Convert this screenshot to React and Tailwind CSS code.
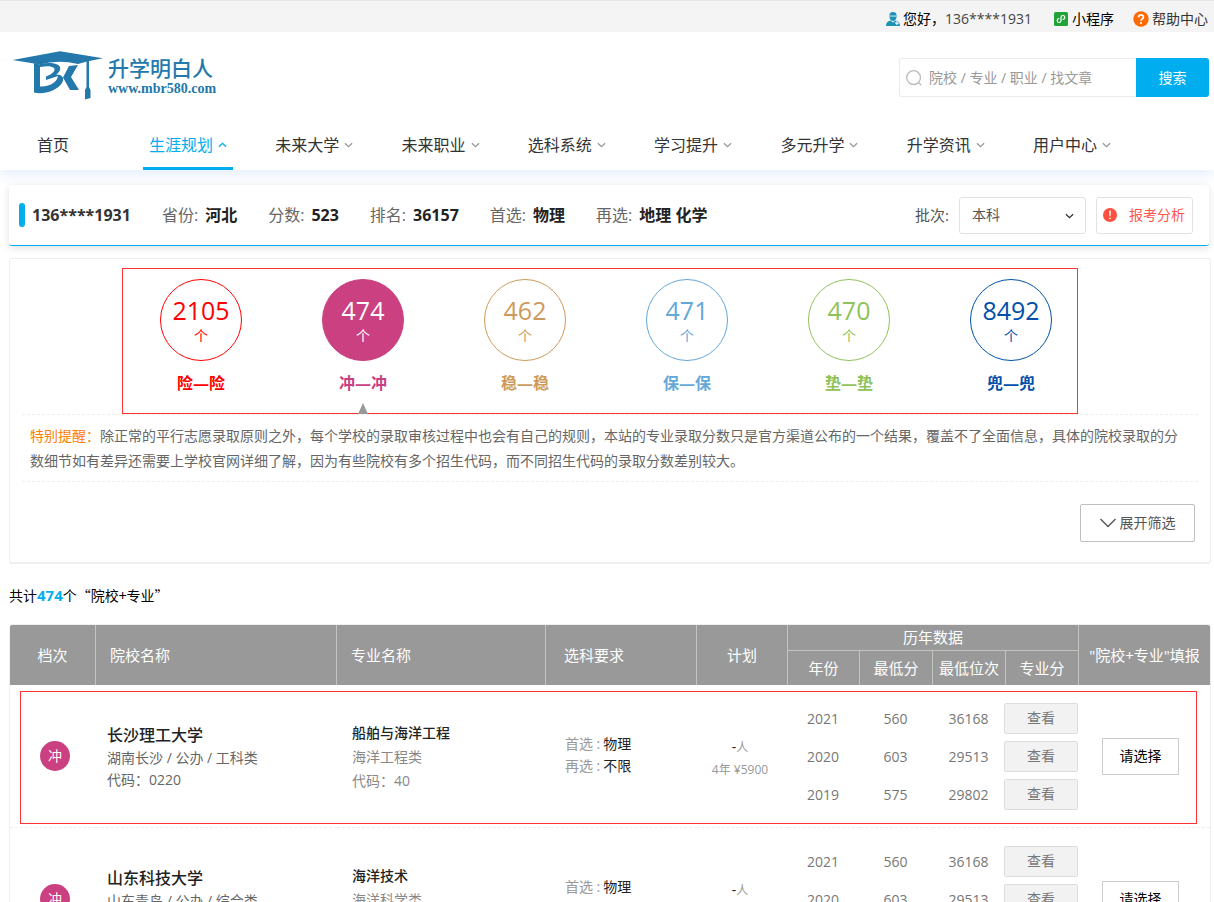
import { clsx } from "clsx";

const navItems = [
  { label: "生涯规划", active: true },
  { label: "未来大学" },
  { label: "未来职业" },
  { label: "选科系统" },
  { label: "学习提升" },
  { label: "多元升学" },
  { label: "升学资讯" },
  { label: "用户中心" },
];

const profile = [
  { label: "省份", value: "河北" },
  { label: "分数", value: "523" },
  { label: "排名", value: "36157" },
  { label: "首选", value: "物理" },
  { label: "再选", value: "地理 化学" },
];

const tiers = [
  { name: "险", count: 2105, color: "text-[#ff0000]" },
  { name: "冲", count: 474, color: "text-[#cb4080]", active: true },
  { name: "稳", count: 462, color: "text-[#cd9a5b]" },
  { name: "保", count: 471, color: "text-[#64a7d9]" },
  { name: "垫", count: 470, color: "text-[#8fc258]" },
  { name: "兜", count: 8492, color: "text-[#0050aa]" },
];

const history = [
  { year: 2021, score: 560, rank: 36168 },
  { year: 2020, score: 603, rank: 29513 },
  { year: 2019, score: 575, rank: 29802 },
];

const rows = [
  {
    id: 1,
    school: "长沙理工大学",
    info: "湖南长沙 / 公办 / 工科类",
    code: "0220",
    major: "船舶与海洋工程",
    category: "海洋工程类",
    majorCode: "40",
    first: "物理",
    second: "不限",
    fee: "4年 ¥5900",
    marked: true,
  },
  {
    id: 2,
    school: "山东科技大学",
    info: "山东青岛 / 公办 / 综合类",
    code: "0424",
    major: "海洋技术",
    category: "海洋科学类",
    majorCode: "21",
    first: "物理",
    second: "不限",
    fee: "4年 ¥5500",
  },
];

function Chevron({ up, className }) {
  return (
    <svg viewBox="0 0 10 6" fill="none" stroke="currentColor" strokeWidth="1.5" className={className}>
      <path d={up ? "M1 5l4-3.8L9 5" : "M1 1l4 3.8L9 1"} />
    </svg>
  );
}

function Logo() {
  return (
    <a href="#" className="flex items-center gap-1 text-[#2478ab]">
      <svg viewBox="0 0 92 52" className="h-[52px] w-[92px]" fill="currentColor">
        <path d="M0.700 10L48 1.300L91 8.300L76 11.300L66 14Q46 9.500 28 14.500L22 13.500Z" />
        <path d="M22 13L28 14.500V36.500C39 37 45.500 31 46 26L34 30V26.500C41 24 44 20 42 18C39 15.500 34 16 28 17V14C40 11.500 50 14 48 20C47 22.500 45 24 44 24.500C50 24 53 28 50 33C45 41 31 45 22 42.500Z" />
        <path d="M57 16L66 15L59 27L67 40H58L51 27.500Z" />
        <path d="M74.500 10.500H77V37L78.500 40V48L73 49.500V40L74.500 37Z" />
      </svg>
      <span className="flex flex-col">
        <span className="text-[21px] leading-[26px] font-medium">升学明白人</span>
        <span className="font-['Liberation_Serif',serif] text-sm leading-4 font-bold">www.mbr580.com</span>
      </span>
    </a>
  );
}

function TopBar() {
  return (
    <div className="flex h-8 items-center justify-end border-t border-[#e6e6e6] bg-[#f4f4f4] pt-1 pr-[6px] text-sm leading-5 text-black">
      <a href="#" className="flex items-center gap-[3px]">
        <svg viewBox="0 0 14 14" className="size-[14px]" fill="#1c93b5">
          <path d="M3.500 3C3.500 1 5 0 7 0s3.500 1 3.500 3v2C10.500 7.300 9 9 7 9S3.500 7.300 3.500 5z" />
          <path d="M4 3.600h6v.9H4z" fill="#f4f4f4" />
          <path d="M0 14c0-3 1.500-5 4.500-5.500L7 10.500l2.500-2c3 .5 4.500 2.500 4.500 5.500z" />
          <path d="M10.300 9.300h1.200v1.300h1.300v1.200h-1.300v1.300h-1.200v-1.300H9v-1.200h1.300z" fill="#f4f4f4" />
        </svg>
        <span>
          您好，<span className="text-[#444]">136****1931</span>
        </span>
      </a>
      <a href="#" className="ml-[22px] flex items-center gap-1">
        <svg viewBox="0 0 14 14" className="size-[14px]">
          <rect width="14" height="14" rx="1.500" fill="#21a33a" />
          <path
            d="M4.800 6.700a1.900 1.900 0 1 0 2.200 2V5.300a1.900 1.900 0 1 1 2.200 2"
            fill="none"
            stroke="#fff"
            strokeWidth="1.200"
            strokeLinecap="round"
          />
        </svg>
        小程序
      </a>
      <a href="#" className="ml-[19px] flex items-center gap-[3px] text-[#333]">
        <svg viewBox="0 0 16 16" className="size-4">
          <circle cx="8" cy="8" r="7.700" fill="#ff6a00" />
          <path d="M5.600 6.300C5.600 3.200 10.400 3.200 10.400 6.200C10.400 8 8 8 8 9.700" fill="none" stroke="#fff" strokeWidth="1.800" />
          <circle cx="8" cy="12" r="1.100" fill="#fff" />
        </svg>
        帮助中心
      </a>
    </div>
  );
}

function Header() {
  return (
    <header className="shadow-[0_4px_14px_#e3edfc]">
      <TopBar />
      <div className="flex h-[86px] items-start justify-between pt-[18px] pr-[5px] pl-3">
        <Logo />
        <form className="mt-2 flex h-[39px] w-[310px]">
          <label className="flex min-w-0 flex-1 items-center gap-[7px] rounded-l-[3px] border border-r-0 border-[#ebebeb] pl-[6px]">
            <svg viewBox="0 0 16 16" className="size-4 shrink-0" fill="none" stroke="#bbb" strokeWidth="1.300">
              <circle cx="7.600" cy="7.600" r="6.900" />
              <path d="M12.500 12.500l2.700 2.700" />
            </svg>
            <input
              type="text"
              aria-label="搜索"
              placeholder="院校 / 专业 / 职业 / 找文章"
              className="w-full min-w-0 text-sm outline-none placeholder:text-[#999]"
            />
          </label>
          <button type="button" className="w-[73px] rounded-r-[3px] bg-[#00aeef] text-sm text-white">
            搜索
          </button>
        </form>
      </div>
      <nav className="flex h-[52px] pr-[97px] pl-[30px] text-base text-[#333]">
        <a href="#" className="w-[113px] pl-[7px] leading-[54px]">
          首页
        </a>
        <div className="flex flex-1 justify-between">
          {navItems.map((item) => (
            <a
              key={item.label}
              href="#"
              className={clsx(
                "flex w-[90px] items-center justify-center gap-[5px] border-b-3 pt-1",
                item.active ? "border-[#00aeef] text-[#00aeef]" : "border-transparent",
              )}
            >
              <span className="shrink-0">{item.label}</span>
              <Chevron up={item.active} className={clsx("h-[6px] w-[9px]", !item.active && "text-[#999]")} />
            </a>
          ))}
        </div>
      </nav>
    </header>
  );
}

function ProfileBar() {
  return (
    <section className="mr-[2px] flex h-[61px] items-center rounded-[3px] border-b border-[#00aeef] bg-white pr-4 pl-[10px] text-base shadow-[0_2px_8px_rgba(0,0,0,0.12)]">
      <span className="h-6 w-[6px] rounded-full bg-[#00aeef]" />
      <b className="ml-[7px] text-[#333]">136****1931</b>
      {profile.map((item) => (
        <span key={item.label} className="ml-[31px] text-[#666]">
          {item.label}:<b className="ml-[7px] text-[#222]">{item.value}</b>
        </span>
      ))}
      <label htmlFor="batch" className="ml-auto text-[15px] text-[#555]">
        批次:
      </label>
      <div className="relative ml-[10px]">
        <select
          id="batch"
          className="h-[37px] w-[127px] appearance-none rounded-[3px] border border-[#e2e2e2] bg-white pl-3 text-sm text-[#555]"
        >
          <option>本科</option>
        </select>
        <Chevron className="pointer-events-none absolute top-4 right-3 h-[6px] w-[9px] text-[#333]" />
      </div>
      <button
        type="button"
        className="ml-[10px] flex h-[37px] w-[97px] items-center gap-3 rounded-[3px] border border-[#e2e2e2] pl-[6px] text-sm text-[#ff5548]"
      >
        <svg viewBox="0 0 14 14" className="size-[14px] shrink-0">
          <circle cx="7" cy="7" r="7" fill="#ff4f3f" />
          <path d="M6.100 2.800h1.800l-.4 5.400h-1z" fill="#fff" />
          <circle cx="7" cy="10.300" r=".9" fill="#fff" />
        </svg>
        报考分析
      </button>
    </section>
  );
}

function TierPanel() {
  return (
    <section className="mt-3 rounded-[3px] border border-b-2 border-[#efefef] px-3 pt-[9px] pb-5">
      <div className="mr-[120px] ml-[100px] flex h-[146px] justify-between border border-[#ff3333] pt-[10px] pr-[25px] pl-[37px]">
        {tiers.map((tier) => (
          <button key={tier.name} type="button" className={clsx("flex w-[82px] flex-col items-center", tier.color)}>
            <span
              className={clsx(
                "flex size-[82px] shrink-0 flex-col items-center rounded-full border border-current pt-[15px]",
                tier.active && "bg-[#cb4080]",
              )}
            >
              <span className={clsx("text-[25px] leading-[30px]", tier.active && "text-white")}>{tier.count}</span>
              <span className={clsx("text-sm leading-[22px]", tier.active && "text-white")}>个</span>
            </span>
            <b className="mt-[10px] text-base leading-6">
              {tier.name}—{tier.name}
            </b>
            {tier.active && (
              <svg viewBox="0 0 10 11" className="mt-2 h-[11px] w-[10px] shrink-0" fill="#999">
                <path d="M5 0l5 11H0z" />
              </svg>
            )}
          </button>
        ))}
      </div>
      <p className="border-y border-dashed border-[#eee] px-2 py-2 text-sm leading-[25px] text-[#666]">
        <span className="text-[#ff8000]">特别提醒：</span>
        除正常的平行志愿录取原则之外，每个学校的录取审核过程中也会有自己的规则，本站的专业录取分数只是官方渠道公布的一个结果，覆盖不了全面信息，具体的院校录取的分数细节如有差异还需要上学校官网详细了解，因为有些院校有多个招生代码，而不同招生代码的录取分数差别较大。
      </p>
      <button
        type="button"
        className="mt-[22px] mr-[3px] ml-auto flex h-[38px] w-[115px] items-center justify-center gap-1 rounded-[2px] border border-[#bfbfbf] text-sm text-[#555]"
      >
        <svg viewBox="0 0 16 10" className="h-[10px] w-4" fill="none" stroke="currentColor" strokeWidth="1.300">
          <path d="M.5 1L8 8.500L15.500 1" />
        </svg>
        展开筛选
      </button>
    </section>
  );
}

function ResultRow({ row }) {
  return (
    <tr className="relative h-[143px] text-sm text-[#777]">
      <td>
        {row.marked && (
          <span className="pointer-events-none absolute top-[6px] right-[13px] bottom-1 left-[10px] border border-[#ff3333]" />
        )}
        <span className="ml-[30px] flex size-[30px] items-center justify-center rounded-full bg-[#cb4080] text-white">冲</span>
      </td>
      <td className="pt-[2px] pl-[11px] leading-[22px] text-[#666]">
        <h3 className="text-base leading-6 font-medium text-[#222]">{row.school}</h3>
        <p>{row.info}</p>
        <p>代码：{row.code}</p>
      </td>
      <td className="pt-[2px] pl-[15px] leading-6 text-[#888]">
        <h4 className="font-medium text-[#222]">{row.major}</h4>
        <p>{row.category}</p>
        <p>代码：{row.majorCode}</p>
      </td>
      <td className="pb-[2px] pl-[19px] leading-[22px] text-[#999]">
        <p>
          首选 :<span className="ml-[3px] text-[#222]">{row.first}</span>
        </p>
        <p>
          再选 :<span className="ml-[3px] text-[#222]">{row.second}</span>
        </p>
      </td>
      <td className="pt-[6px] pr-[5px] text-center text-xs leading-[22px] text-[#999]">
        <p>
          <span className="text-sm text-[#222]">-</span>人
        </p>
        <p>{row.fee}</p>
      </td>
      {["year", "score", "rank"].map((field) => (
        <td key={field} className="pr-[2px]">
          <div className="flex flex-col gap-[7px] text-center leading-[31px]">
            {history.map((h) => (
              <span key={h.year}>{h[field]}</span>
            ))}
          </div>
        </td>
      ))}
      <td>
        <div className="-ml-[2px] flex flex-col gap-[7px]">
          {history.map((h) => (
            <button key={h.year} type="button" className="h-[31px] w-[74px] rounded-[2px] border border-[#ddd] bg-[#f2f2f2]">
              查看
            </button>
          ))}
        </div>
      </td>
      <td>
        <button type="button" className="ml-[23px] h-[37px] w-[77px] border border-[#ccc] text-black">
          请选择
        </button>
      </td>
    </tr>
  );
}

function ResultTable() {
  return (
    <div className="overflow-hidden rounded-[3px] border border-[#efefef]">
      <table className="w-full table-fixed border-separate border-spacing-0">
        <colgroup>
          <col className="w-[86px]" />
          <col />
          <col className="w-[209px]" />
          <col className="w-[151px]" />
          <col className="w-[91px]" />
          <col className="w-[72px]" />
          <col className="w-[73px]" />
          <col className="w-[73px]" />
          <col className="w-[73px]" />
          <col className="w-[131px]" />
        </colgroup>
        <thead className="bg-[#999] text-[15px] text-white [&_th]:border-[#c4c4be] [&_th]:font-normal">
          <tr className="h-[26px]">
            <th rowSpan={2} className="border-r">档次</th>
            <th rowSpan={2} className="border-r pl-[14px] text-left">院校名称</th>
            <th rowSpan={2} className="border-r pl-[14px] text-left">专业名称</th>
            <th rowSpan={2} className="border-r pl-[18px] text-left">选科要求</th>
            <th rowSpan={2} className="border-r">计划</th>
            <th colSpan={4} className="border-r border-b leading-[25px]">历年数据</th>
            <th rowSpan={2}>"院校+专业"填报</th>
          </tr>
          <tr className="h-[34px]">
            <th className="border-r">年份</th>
            <th className="border-r">最低分</th>
            <th className="border-r">最低位次</th>
            <th className="border-r">专业分</th>
          </tr>
        </thead>
        <tbody className="[&_td]:border-b [&_td]:border-dashed [&_td]:border-[#eee]">
          {rows.map((row) => (
            <ResultRow key={row.id} row={row} />
          ))}
        </tbody>
      </table>
    </div>
  );
}

export default function App() {
  return (
    <div className="min-h-screen overflow-x-hidden bg-white font-['Open_Sans','Noto_Sans_CJK_SC',sans-serif]">
      <Header />
      <main className="mt-[15px] mr-[3px] ml-[9px]">
        <ProfileBar />
        <TierPanel />
        <p className="mt-5 mb-[17px] text-sm leading-[22px] text-black">
          共计<b className="text-[15px] text-[#00aeef]">474</b>个
          <span className="font-['Noto_Sans_CJK_SC',sans-serif]">“院校+专业”</span>
        </p>
        <ResultTable />
      </main>
    </div>
  );
}
